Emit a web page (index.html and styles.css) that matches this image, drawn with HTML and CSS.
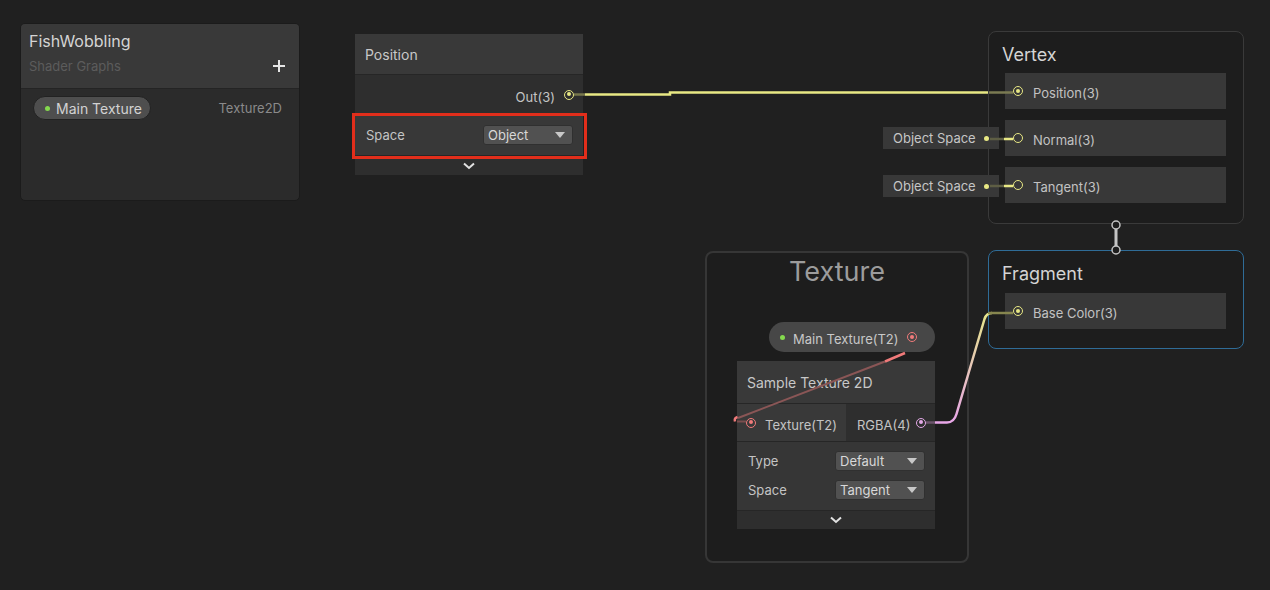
FILE: index.html
```html
<!DOCTYPE html>
<html>
<head>
<meta charset="utf-8">
<link rel="stylesheet" href="styles.css">
</head>
<body>
<div class="canvas">

  <div class="blackboard">
    <div class="bb-header">
      <div class="bb-title">FishWobbling</div>
      <div class="bb-subrow">
        <span class="bb-sub">Shader Graphs</span>
        <svg class="plus" width="12" height="12" viewBox="0 0 12 12"><rect x="5" y="0" width="2" height="12" fill="#e6e6e6"/><rect x="0" y="5" width="12" height="2" fill="#e6e6e6"/></svg>
      </div>
    </div>
    <div class="bb-body">
      <div class="bb-prop">
        <span class="bb-pill"><span class="dot-green"></span>Main Texture</span>
        <span class="bb-type">Texture2D</span>
      </div>
    </div>
  </div>

  <div class="node node-position">
    <div class="node-title">Position</div>
    <div class="out-row"><span class="lbl">Out(3)</span><span class="port yellow filled"></span></div>
    <div class="setting-row"><span>Space</span><span class="dropdown">Object<i class="caret"></i></span></div>
    <div class="chevron-bar"><svg width="12" height="8" viewBox="0 0 12 8"><polyline points="1,1.5 6,6 11,1.5" fill="none" stroke="#e2e2e2" stroke-width="2"/></svg></div>
  </div>

  <div class="context context-vertex">
    <div class="ctx-title">Vertex</div>
    <div class="ctx-slots">
      <div class="slot"><span class="port yellow filled"></span><span class="lbl">Position(3)</span></div>
      <div class="slot"><span class="port yellow"></span><span class="lbl">Normal(3)</span></div>
      <div class="slot"><span class="port yellow"></span><span class="lbl">Tangent(3)</span></div>
    </div>
  </div>

  <div class="inline-input input-normal"><span>Object Space</span><span class="mini-dot"></span></div>
  <div class="inline-input input-tangent"><span>Object Space</span><span class="mini-dot"></span></div>

  <div class="context context-fragment">
    <div class="ctx-title">Fragment</div>
    <div class="ctx-slots">
      <div class="slot"><span class="port yellow filled"></span><span class="lbl">Base Color(3)</span></div>
    </div>
  </div>

  <div class="group group-texture">
    <div class="group-title">Texture</div>
  </div>

  <div class="prop-node">
    <span class="dot-green"></span><span class="prop-label lbl">Main Texture(T2)</span><span class="port red filled"></span>
  </div>

  <div class="node node-sample">
    <div class="node-title">Sample Texture 2D</div>
    <div class="port-row">
      <div class="port-in"><span class="port red filled"></span><span class="lbl">Texture(T2)</span></div>
      <div class="port-out"><span class="lbl">RGBA(4)</span><span class="port pink filled"></span></div>
    </div>
    <div class="settings">
      <div class="set-line"><span>Type</span><span class="dropdown">Default<i class="caret"></i></span></div>
      <div class="set-line"><span>Space</span><span class="dropdown">Tangent<i class="caret"></i></span></div>
    </div>
    <div class="chevron-bar"><svg width="12" height="8" viewBox="0 0 12 8"><polyline points="1,1.5 6,6 11,1.5" fill="none" stroke="#e2e2e2" stroke-width="2"/></svg></div>
  </div>

  <svg class="wires" width="1270" height="590" viewBox="0 0 1270 590">
    <defs>
      <linearGradient id="pg" x1="0" y1="423" x2="0" y2="313" gradientUnits="userSpaceOnUse">
        <stop offset="0" stop-color="#e8a6e8"/>
        <stop offset="1" stop-color="#e6e68a"/>
      </linearGradient>
    </defs>
    <!-- Out(3) -> Position(3) -->
    <line x1="574" y1="94.5" x2="585" y2="94.5" stroke="#77774c" stroke-width="2.5"/>
    <polyline points="585,94.5 670,94.5 670,92.5 988,92.5" fill="none" stroke="#e8e884" stroke-width="2.5"/>
    <line x1="989" y1="92.5" x2="1013" y2="92.5" stroke="#7a7a52" stroke-width="2.5"/>
    <!-- Object Space -> Normal / Tangent -->
    <line x1="990" y1="139" x2="1004" y2="139" stroke="#5e5e44" stroke-width="2.5"/>
    <line x1="1004" y1="139" x2="1013" y2="139" stroke="#e8e884" stroke-width="2.5"/>
    <line x1="990" y1="186" x2="1004" y2="186" stroke="#5e5e44" stroke-width="2.5"/>
    <line x1="1004" y1="186" x2="1013" y2="186" stroke="#e8e884" stroke-width="2.5"/>
    <!-- context link -->
    <line x1="1116" y1="229" x2="1116" y2="246" stroke="#c4c4c4" stroke-width="3"/>
    <circle cx="1116" cy="225" r="4" fill="#1d1d1d" stroke="#c4c4c4" stroke-width="1.5"/>
    <circle cx="1116" cy="250" r="4" fill="#1d1d1d" stroke="#c4c4c4" stroke-width="1.5"/>
    <!-- RGBA -> Base Color -->
    <line x1="926" y1="422.5" x2="935" y2="422.5" stroke="#6b546b" stroke-width="2.5"/>
    <path d="M935 422.5 L947 422.5 Q954 422.5 956.5 414 L984.5 319 Q986.5 313 992 313" fill="none" stroke="url(#pg)" stroke-width="2.5"/>
    <line x1="988" y1="313" x2="1013" y2="313" stroke="#86864f" stroke-width="2.5"/>
    <!-- Main Texture -> Texture(T2) -->
    <line x1="905" y1="353" x2="885" y2="361.5" stroke="#f07a7a" stroke-width="2.5"/>
    <line x1="885" y1="361.5" x2="738" y2="418" stroke="#8a5656" stroke-width="2"/>
    <path d="M737.5 417 Q734 418 735 421.5" fill="none" stroke="#f07a7a" stroke-width="2.5"/>
    <line x1="737" y1="421.5" x2="746" y2="421.5" stroke="#7a4e4e" stroke-width="2"/>
  </svg>

  <div class="highlight"></div>
</div>
</body>
</html>
```

FILE: styles.css
```css
* { box-sizing: border-box; }

html, body {
  margin: 0;
  padding: 0;
  background: #202020;
}

.canvas {
  position: relative;
  width: 1270px;
  height: 590px;
  overflow: hidden;
  background: #202020;
  font-family: Inter, "Noto Sans", "Liberation Sans", sans-serif;
  color: #c4c4c4;
  font-size: 13px;
}

/* nudges label text down, as the editor's font sits low in its line */
.lbl { padding-top: 4px; }

/* ---------- Blackboard ---------- */
.blackboard {
  position: absolute;
  left: 20px;
  top: 23px;
  width: 280px;
  height: 178px;
  background: #2b2b2b;
  border: 1px solid #1b1b1b;
  border-radius: 5px;
  overflow: hidden;
}
.bb-header {
  height: 65px;
  background: #393939;
  border-bottom: 1px solid #242424;
  padding: 8px 14px 0 8px;
}
.bb-title {
  font-size: 16px;
  line-height: 18px;
  color: #d4d4d4;
}
.bb-subrow {
  display: flex;
  justify-content: space-between;
  align-items: center;
  margin-top: 8px;
  height: 16px;
}
.bb-sub {
  font-size: 13px;
  color: #5c5c5c;
}
.plus { display: block; }
.bb-body {
  padding: 7px 17px 0 12px;
}
.bb-prop {
  display: flex;
  justify-content: space-between;
  align-items: center;
}
.bb-pill {
  display: flex;
  align-items: center;
  gap: 6px;
  height: 24px;
  width: 118px;
  padding-left: 11px;
  border-radius: 12px;
  background: #4e4e4e;
  border: 1px solid #222222;
  font-size: 14px;
  color: #d2d2d2;
}
.bb-type {
  font-size: 13px;
  color: #8a8a8a;
}
.dot-green {
  width: 5px;
  height: 5px;
  border-radius: 50%;
  background: #84d94e;
  flex: none;
}

/* ---------- Ports ---------- */
.port {
  position: relative;
  flex: none;
  width: 10px;
  height: 10px;
  border-radius: 50%;
  border: 1.5px solid currentColor;
}
.port.filled::after {
  content: "";
  position: absolute;
  left: 1.5px;
  top: 1.5px;
  width: 4px;
  height: 4px;
  border-radius: 50%;
  background: currentColor;
}
.port.yellow { color: #e8e884; }
.port.red { color: #f07a7a; }
.port.pink { color: #e2a8e6; }

/* ---------- Nodes ---------- */
.node {
  position: absolute;
  background: #2e2e2e;
  display: flex;
  flex-direction: column;
}
.node-title {
  height: 41px;
  flex: none;
  display: flex;
  align-items: center;
  padding-left: 10px;
  background: #393939;
  border-bottom: 1px solid #262626;
  font-size: 14px;
  color: #c8c8c8;
}
.chevron-bar {
  display: flex;
  justify-content: center;
  align-items: center;
  background: #2e2e2e;
  border-top: 1px solid #262626;
}
.chevron-bar svg { display: block; }

.dropdown {
  display: flex;
  align-items: center;
  justify-content: space-between;
  width: 90px;
  height: 20px;
  padding: 0 7px 0 4px;
  background: #515151;
  border: 1px solid #303030;
  border-radius: 3px;
  font-size: 13px;
  color: #d8d8d8;
}
.caret {
  width: 0;
  height: 0;
  border-left: 5px solid transparent;
  border-right: 5px solid transparent;
  border-top: 6px solid #c8c8c8;
}

.node-position {
  left: 355px;
  top: 34px;
  width: 228px;
  height: 141px;
}
.out-row {
  height: 39px;
  display: flex;
  justify-content: flex-end;
  align-items: center;
  gap: 9px;
  padding-right: 9px;
  background: #2e2e2e;
  color: #c4c4c4;
}
.setting-row {
  height: 41px;
  display: flex;
  justify-content: space-between;
  align-items: center;
  padding: 0 10px 0 11px;
  background: #383838;
  color: #c4c4c4;
}
.node-position .chevron-bar { flex: 1; }

.highlight {
  position: absolute;
  left: 352px;
  top: 113px;
  width: 235px;
  height: 46px;
  border: 3px solid #e22e1b;
}

/* ---------- Contexts ---------- */
.context {
  position: absolute;
  left: 988px;
  width: 256px;
  background: #1d1d1d;
  border: 1px solid #3a3a3a;
  border-radius: 8px;
  padding: 14px 17px 18px 13px;
}
.context-vertex { top: 31px; height: 193px; }
.context-fragment { top: 250px; height: 99px; border-color: #2f6c97; }
.ctx-title {
  font-size: 18px;
  line-height: 18px;
  color: #d4d4d4;
}
.ctx-slots {
  display: flex;
  flex-direction: column;
  gap: 11px;
  margin-top: 9px;
  margin-left: 3px;
}
.context-fragment .ctx-slots { margin-top: 10px; }
.slot {
  height: 36px;
  display: flex;
  align-items: center;
  gap: 10px;
  padding-left: 8px;
  background: #383838;
  color: #c2c2c2;
}

.inline-input {
  position: absolute;
  left: 883px;
  width: 116px;
  height: 22px;
  display: flex;
  align-items: center;
  justify-content: space-between;
  padding: 0 10px 0 10px;
  background: #383838;
  color: #c6c6c6;
}
.input-normal { top: 127px; }
.input-tangent { top: 175px; }
.mini-dot {
  width: 5px;
  height: 5px;
  border-radius: 50%;
  background: #e8e884;
}

/* ---------- Group ---------- */
.group {
  position: absolute;
  left: 705px;
  top: 251px;
  width: 264px;
  height: 312px;
  border: 2px solid #363636;
  border-radius: 8px;
  background: #1d1d1d;
}
.group-title {
  text-align: center;
  font-size: 27px;
  line-height: 32px;
  margin-top: 3px;
  color: #9c9c9c;
}

.prop-node {
  position: absolute;
  left: 769px;
  top: 322px;
  width: 166px;
  height: 30px;
  border-radius: 15px;
  background: #474747;
  display: flex;
  align-items: center;
  padding: 0 18px 0 11px;
  gap: 8px;
  color: #c8c8c8;
}
.prop-label { flex: 1; }

.node-sample {
  left: 737px;
  top: 361px;
  width: 198px;
  height: 168px;
}
.node-sample .node-title { height: 43px; }
.port-row {
  height: 37px;
  display: flex;
  flex: none;
}
.port-in {
  width: 109px;
  display: flex;
  align-items: center;
  gap: 9px;
  padding-left: 9px;
  background: #393939;
  color: #c4c4c4;
}
.port-out {
  flex: 1;
  display: flex;
  align-items: center;
  justify-content: space-between;
  padding: 0 9px 0 11px;
  background: #2e2e2e;
  color: #c4c4c4;
}
.settings {
  display: flex;
  flex-direction: column;
  gap: 9px;
  padding: 9px 10px 10px 11px;
  background: #363636;
  border-top: 1px solid #262626;
}
.set-line {
  height: 20px;
  display: flex;
  justify-content: space-between;
  align-items: center;
  color: #c4c4c4;
}
.node-sample .chevron-bar { flex: 1; }

/* ---------- Wires ---------- */
.wires {
  position: absolute;
  left: 0;
  top: 0;
  pointer-events: none;
}
```
